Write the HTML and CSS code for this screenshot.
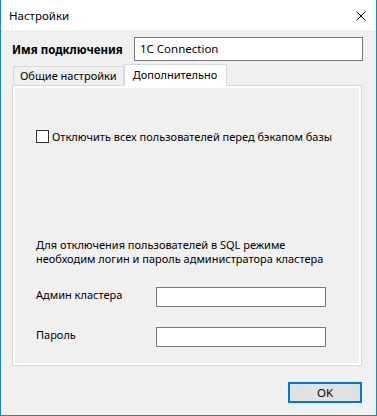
FILE: index.html
```html
<!DOCTYPE html>
<html lang="ru">
<head>
    <meta charset="UTF-8">
    <title>Настройки</title>
    <link rel="stylesheet" href="styles.css">
</head>
<body>
    <div class="window">
        <div class="titlebar">
            <span class="title">Настройки</span>
            <svg class="close" width="10" height="10" viewBox="0 0 10 10">
                <path d="M0.5 0.5 L9.5 9.5 M9.5 0.5 L0.5 9.5" stroke="#000" stroke-width="1" fill="none"/>
            </svg>
        </div>

        <div class="content">
            <div class="name-row">
                <label class="name-label">Имя подключения</label>
                <div class="name-input">1C Connection</div>
            </div>

            <div class="tabs">
                <div class="tab">Общие настройки</div>
                <div class="tab active">Дополнительно</div>
            </div>

            <div class="panel">
                <div class="check-row">
                    <span class="checkbox"></span>
                    <span>Отключить всех пользователей перед бэкапом базы</span>
                </div>

                <p class="note">Для отключения пользователей в SQL режиме<br>необходим логин и пароль администратора кластера</p>

                <div class="field-row">
                    <span class="field-label">Админ кластера</span>
                    <div class="field-input"></div>
                </div>
                <div class="field-row">
                    <span class="field-label">Пароль</span>
                    <div class="field-input"></div>
                </div>
            </div>

            <div class="footer">
                <button class="ok-btn">OK</button>
            </div>
        </div>
    </div>
</body>
</html>
```

FILE: styles.css
```css
* {
    margin: 0;
    padding: 0;
    box-sizing: border-box;
}
body {
    font-family: 'Noto Sans', 'Liberation Sans', sans-serif;
    font-size: 11px;
    color: #000;
    background: #fff;
}
.window {
    width: 377px;
    height: 416px;
    border: 1px solid #1883d7;
    border-top: none;
    background: #f0f0f0;
    display: flex;
    flex-direction: column;
}
.titlebar {
    height: 30px;
    background: #fff;
    display: flex;
    align-items: center;
    justify-content: space-between;
    padding: 0 10px 0 8px;
}
.title {
    font-size: 11.5px;
    margin-top: 1px;
}
.close {
    display: block;
    margin-top: 1px;
}
.content {
    padding: 7px 13px 0 11px;
    display: flex;
    flex-direction: column;
}
.name-row {
    display: flex;
    align-items: center;
}
.name-label {
    width: 122px;
    font-weight: bold;
    font-size: 11.5px;
}
.name-input {
    width: 229px;
    height: 24px;
    border: 1px solid #7a7a7a;
    background: #fff;
    padding-left: 5px;
    line-height: 22px;
    font-size: 11.5px;
}
.tabs {
    display: flex;
    align-items: flex-end;
    margin-top: 4px;
    padding-left: 1px;
    height: 20px;
}
.tab {
    height: 19px;
    padding: 0 6px;
    border: 1px solid #d9d9d9;
    border-bottom: none;
    background: #f0f0f0;
    line-height: 18px;
}
.tab.active {
    height: 22px;
    margin-bottom: -1px;
    padding: 0 9px 0 8px;
    background: #fff;
    line-height: 20px;
    position: relative;
    z-index: 1;
}
.panel {
    width: 350px;
    height: 281px;
    border: 1px solid #d9d9d9;
    background: #f0f0f0;
    box-shadow: inset 0 0 0 2px #fff;
    padding: 43px 0 0 23px;
}
.check-row {
    display: flex;
    align-items: center;
    gap: 3px;
    height: 15px;
}
.checkbox {
    width: 13px;
    height: 13px;
    border: 1px solid #333;
    background: #fff;
}
.note {
    margin-top: 94px;
    line-height: 14px;
}
.field-row {
    display: flex;
    align-items: flex-start;
    margin-top: 21px;
}
.field-row + .field-row {
    margin-top: 20px;
}
.field-label {
    width: 120px;
    line-height: 15px;
}
.field-input {
    width: 170px;
    height: 20px;
    border: 1px solid #7a7a7a;
    background: #fff;
}
.footer {
    display: flex;
    justify-content: flex-end;
    margin-top: 16px;
    padding-right: 1px;
}
.ok-btn {
    width: 74px;
    height: 21px;
    border: 2px solid #0078d7;
    background: #e1e1e1;
    font-family: inherit;
    font-size: 11.5px;
    color: #000;
}
```
